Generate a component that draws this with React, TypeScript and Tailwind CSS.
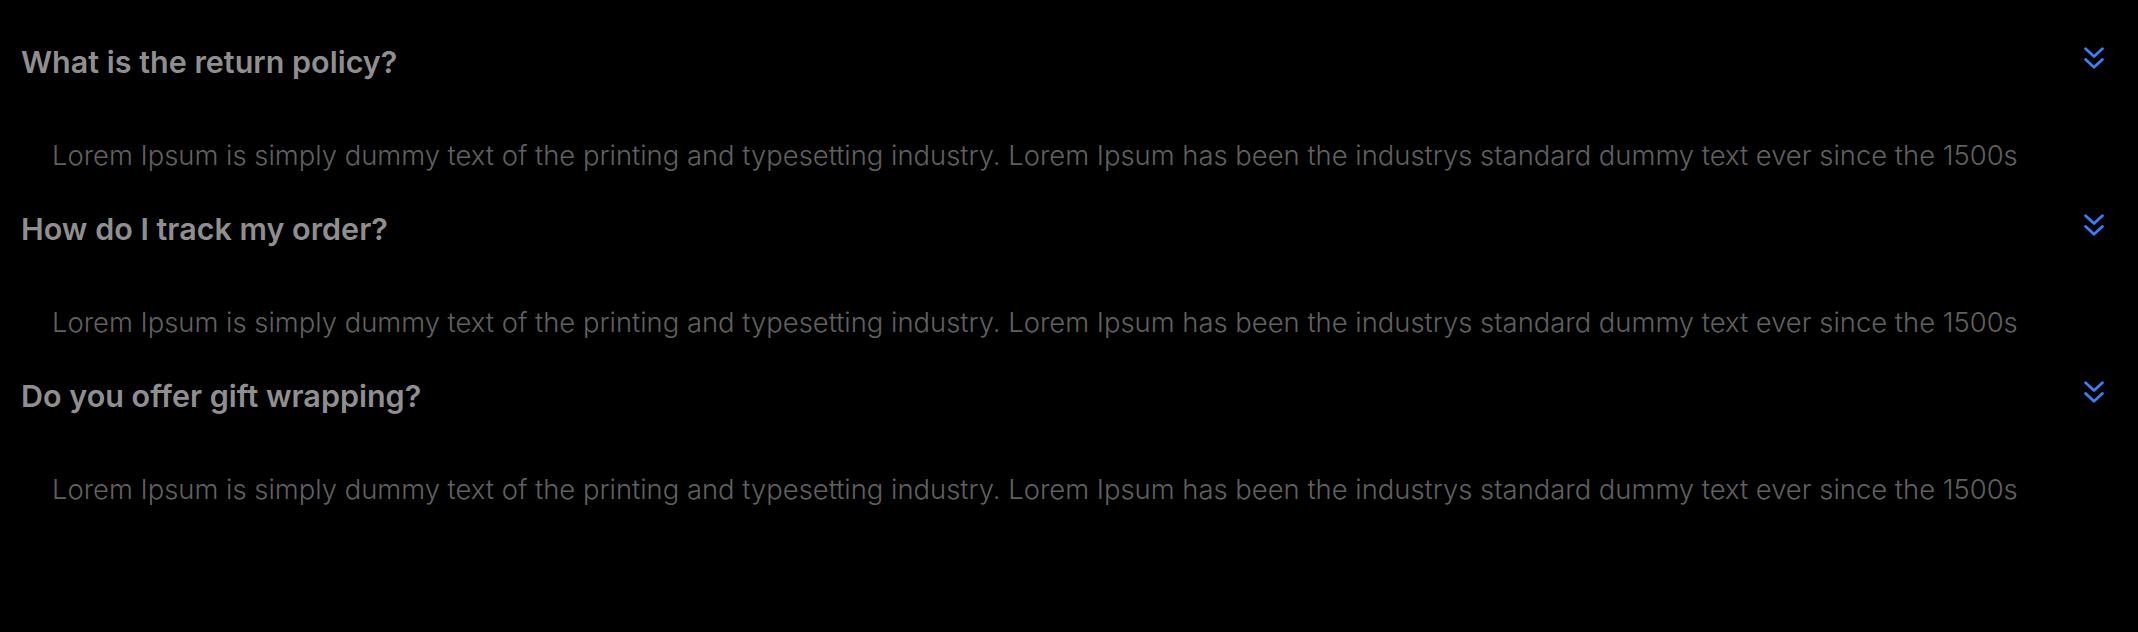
import React from "react";

const items = [
  "What is the return policy?",
  "How do I track my order?",
  "Do you offer gift wrapping?",
];

const body =
  "Lorem Ipsum is simply dummy text of the printing and typesetting industry. Lorem Ipsum has been the industrys standard dummy text ever since the 1500s";

function Chevrons() {
  return (
    <svg width="20" height="22" viewBox="0 0 20 22" fill="none" stroke="#3b7ff5" strokeWidth="2.8" strokeLinecap="round" strokeLinejoin="round">
      <path d="M1.6 1.8 L10 9.5 L18.4 1.8" />
      <path d="M1.6 12.5 L10 20.2 L18.4 12.5" />
    </svg>
  );
}

export default function App() {
  return (
    <div className="w-[2138px] h-[632px] bg-black overflow-hidden" style={{ fontFamily: "Inter, 'Noto Sans', sans-serif" }}>
      <div className="flex flex-col gap-[36px] pt-[44px]">
        {items.map((q) => (
          <div key={q} className="flex flex-col">
            <div className="flex items-start justify-between pl-[21px] pr-[34px]">
              <h3 className="text-[30.5px] leading-[36px] font-semibold text-[#8f8f8f]">{q}</h3>
              <div className="mt-[3px]">
                <Chevrons />
              </div>
            </div>
            <p className="mt-[55px] pl-[52px] text-[27.4px] leading-[40px] font-light text-[#606060] whitespace-nowrap">{body}</p>
          </div>
        ))}
      </div>
    </div>
  );
}
